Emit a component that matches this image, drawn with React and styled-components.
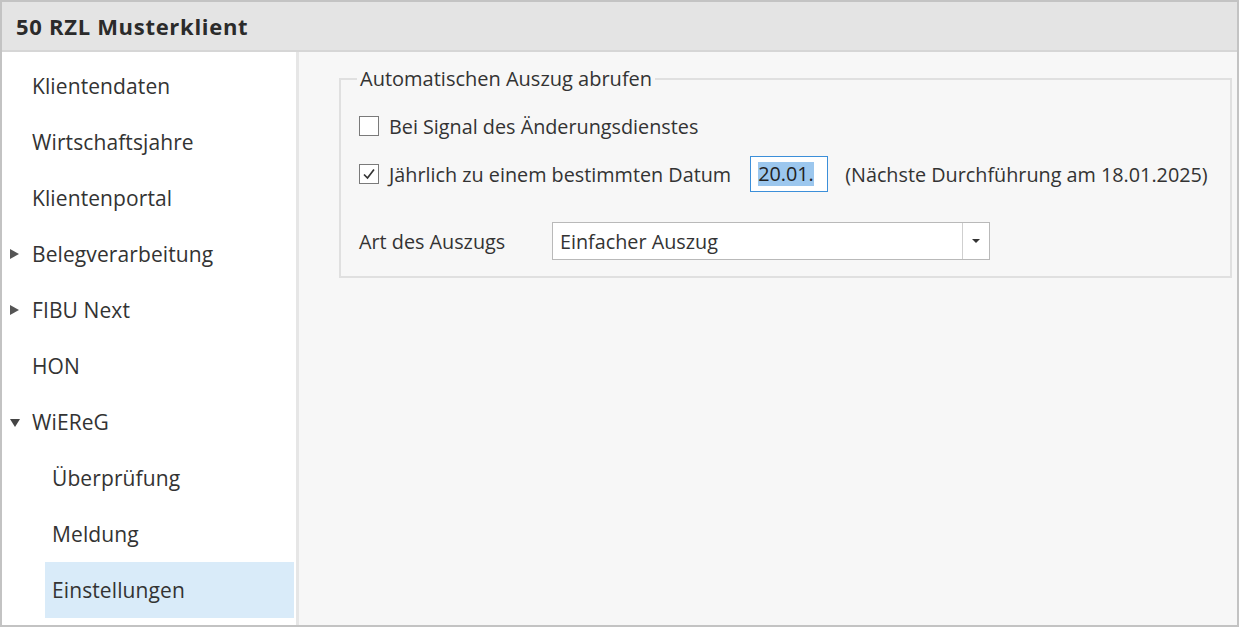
import React from "react";
import styled, { createGlobalStyle } from "styled-components";

const GlobalStyle = createGlobalStyle`
  html, body {
    margin: 0;
    padding: 0;
    background: #ffffff;
  }
  body {
    font-family: "Open Sans", "Noto Sans", sans-serif;
    color: #333333;
  }
`;

const Frame = styled.div`
  width: 1239px;
  height: 627px;
  box-sizing: border-box;
  border: 2px solid #c3c3c3;
  display: flex;
  flex-direction: column;
  overflow: hidden;
`;

const TitleBar = styled.div`
  height: 48px;
  flex: none;
  background: #e4e4e4;
  border-bottom: 2px solid #d6d6d6;
  display: flex;
  align-items: center;
  padding-left: 14px;
  font-size: 22px;
  letter-spacing: 0.7px;
  font-weight: 700;
  color: #2b2b2b;
`;

const Body = styled.div`
  flex: 1;
  display: flex;
  min-height: 0;
`;

const Sidebar = styled.nav`
  width: 294px;
  flex: none;
  background: #ffffff;
  border-right: 3px solid #e6e6e6;
  padding-top: 6px;
  display: flex;
  flex-direction: column;
`;

const NavItem = styled.div`
  height: 56px;
  flex: none;
  display: flex;
  align-items: center;
  position: relative;
  margin-left: ${(p) => (p.$sub ? "43px" : "0")};
  margin-right: 2px;
  padding-left: ${(p) => (p.$sub ? "7px" : "30px")};
  font-size: 21px;
  letter-spacing: 0.1px;
  color: #333333;
  white-space: nowrap;
  background: ${(p) => (p.$selected ? "#d9ebf9" : "transparent")};
`;

const Arrow = styled.span`
  position: absolute;
  left: 8px;
  top: 50%;
  width: 0;
  height: 0;
  ${(p) =>
    p.$open
      ? `
    margin-top: -3px;
    border-left: 5px solid transparent;
    border-right: 5px solid transparent;
    border-top: 8px solid #444;
  `
      : `
    margin-top: -5px;
    border-top: 5px solid transparent;
    border-bottom: 5px solid transparent;
    border-left: 9px solid #555;
  `}
`;

const Content = styled.main`
  flex: 1;
  min-width: 0;
  background: #f7f7f7;
  padding: 13px 5px 0 40px;
`;

const GroupBox = styled.fieldset`
  margin: 0;
  border: 2px solid #e0e0e0;
  padding: 16px 18px 14px 18px;
  height: 213px;
  box-sizing: border-box;
  min-width: 0;
`;

const Legend = styled.legend`
  padding: 0 3px;
  margin-left: -2px;
  font-size: 20px;
  color: #333333;
  white-space: nowrap;
`;

const Row = styled.div`
  display: flex;
  align-items: center;
  white-space: nowrap;
  height: ${(p) => p.$h || "36px"};
  margin-top: ${(p) => p.$mt || "0"};
  font-size: 19.8px;
`;

const Box = styled.span`
  width: 18px;
  height: 18px;
  border: 1px solid #7a7a7a;
  background: #ffffff;
  display: inline-flex;
  align-items: center;
  justify-content: center;
  margin-right: 10px;
  flex: none;
`;

const DateField = styled.div`
  width: 78px;
  height: 36px;
  flex: none;
  box-sizing: border-box;
  border: 1px solid #3c8fd9;
  background: #ffffff;
  margin-left: 19px;
  display: flex;
  align-items: center;
  padding-left: 7px;
  span {
    background: #9cc7ee;
    color: #222;
    line-height: 24px;
  }
`;

const Hint = styled.span`
  margin-left: 17px;
`;

const Label = styled.span`
  width: 193px;
  flex: none;
`;

const Combo = styled.div`
  width: 438px;
  height: 38px;
  flex: none;
  box-sizing: border-box;
  border: 1px solid #b9b9b9;
  background: #ffffff;
  display: flex;
  align-items: center;
`;

const ComboText = styled.span`
  flex: 1;
  padding-left: 7px;
`;

const ComboButton = styled.span`
  width: 26px;
  align-self: stretch;
  border-left: 1px solid #cfcfcf;
  display: flex;
  align-items: center;
  justify-content: center;
  &::after {
    content: "";
    border-left: 4px solid transparent;
    border-right: 4px solid transparent;
    border-top: 4px solid #333;
  }
`;

function Check({ checked }) {
  return (
    <Box>
      {checked && (
        <svg width="14" height="14" viewBox="0 0 14 14">
          <path d="M2 7.5 L5.5 11 L12 2.5" fill="none" stroke="#333" strokeWidth="1.7" />
        </svg>
      )}
    </Box>
  );
}

const nav = [
  { label: "Klientendaten" },
  { label: "Wirtschaftsjahre" },
  { label: "Klientenportal" },
  { label: "Belegverarbeitung", arrow: "closed" },
  { label: "FIBU Next", arrow: "closed" },
  { label: "HON" },
  { label: "WiEReG", arrow: "open" },
  { label: "Überprüfung", sub: true },
  { label: "Meldung", sub: true },
  { label: "Einstellungen", sub: true, selected: true },
];

export default function App() {
  return (
    <>
      <GlobalStyle />
      <Frame>
        <TitleBar>50 RZL Musterklient</TitleBar>
        <Body>
          <Sidebar>
            {nav.map((n) => (
              <NavItem key={n.label} $sub={n.sub} $selected={n.selected}>
                {n.arrow && <Arrow $open={n.arrow === "open"} />}
                {n.label}
              </NavItem>
            ))}
          </Sidebar>
          <Content>
            <GroupBox>
              <Legend>Automatischen Auszug abrufen</Legend>
              <Row $h="36px">
                <Check />
                Bei Signal des Änderungsdienstes
              </Row>
              <Row $h="36px" $mt="12px">
                <Check checked />
                Jährlich zu einem bestimmten Datum
                <DateField>
                  <span>20.01.</span>
                </DateField>
                <Hint>(Nächste Durchführung am 18.01.2025)</Hint>
              </Row>
              <Row $h="38px" $mt="30px">
                <Label>Art des Auszugs</Label>
                <Combo>
                  <ComboText>Einfacher Auszug</ComboText>
                  <ComboButton />
                </Combo>
              </Row>
            </GroupBox>
          </Content>
        </Body>
      </Frame>
    </>
  );
}
